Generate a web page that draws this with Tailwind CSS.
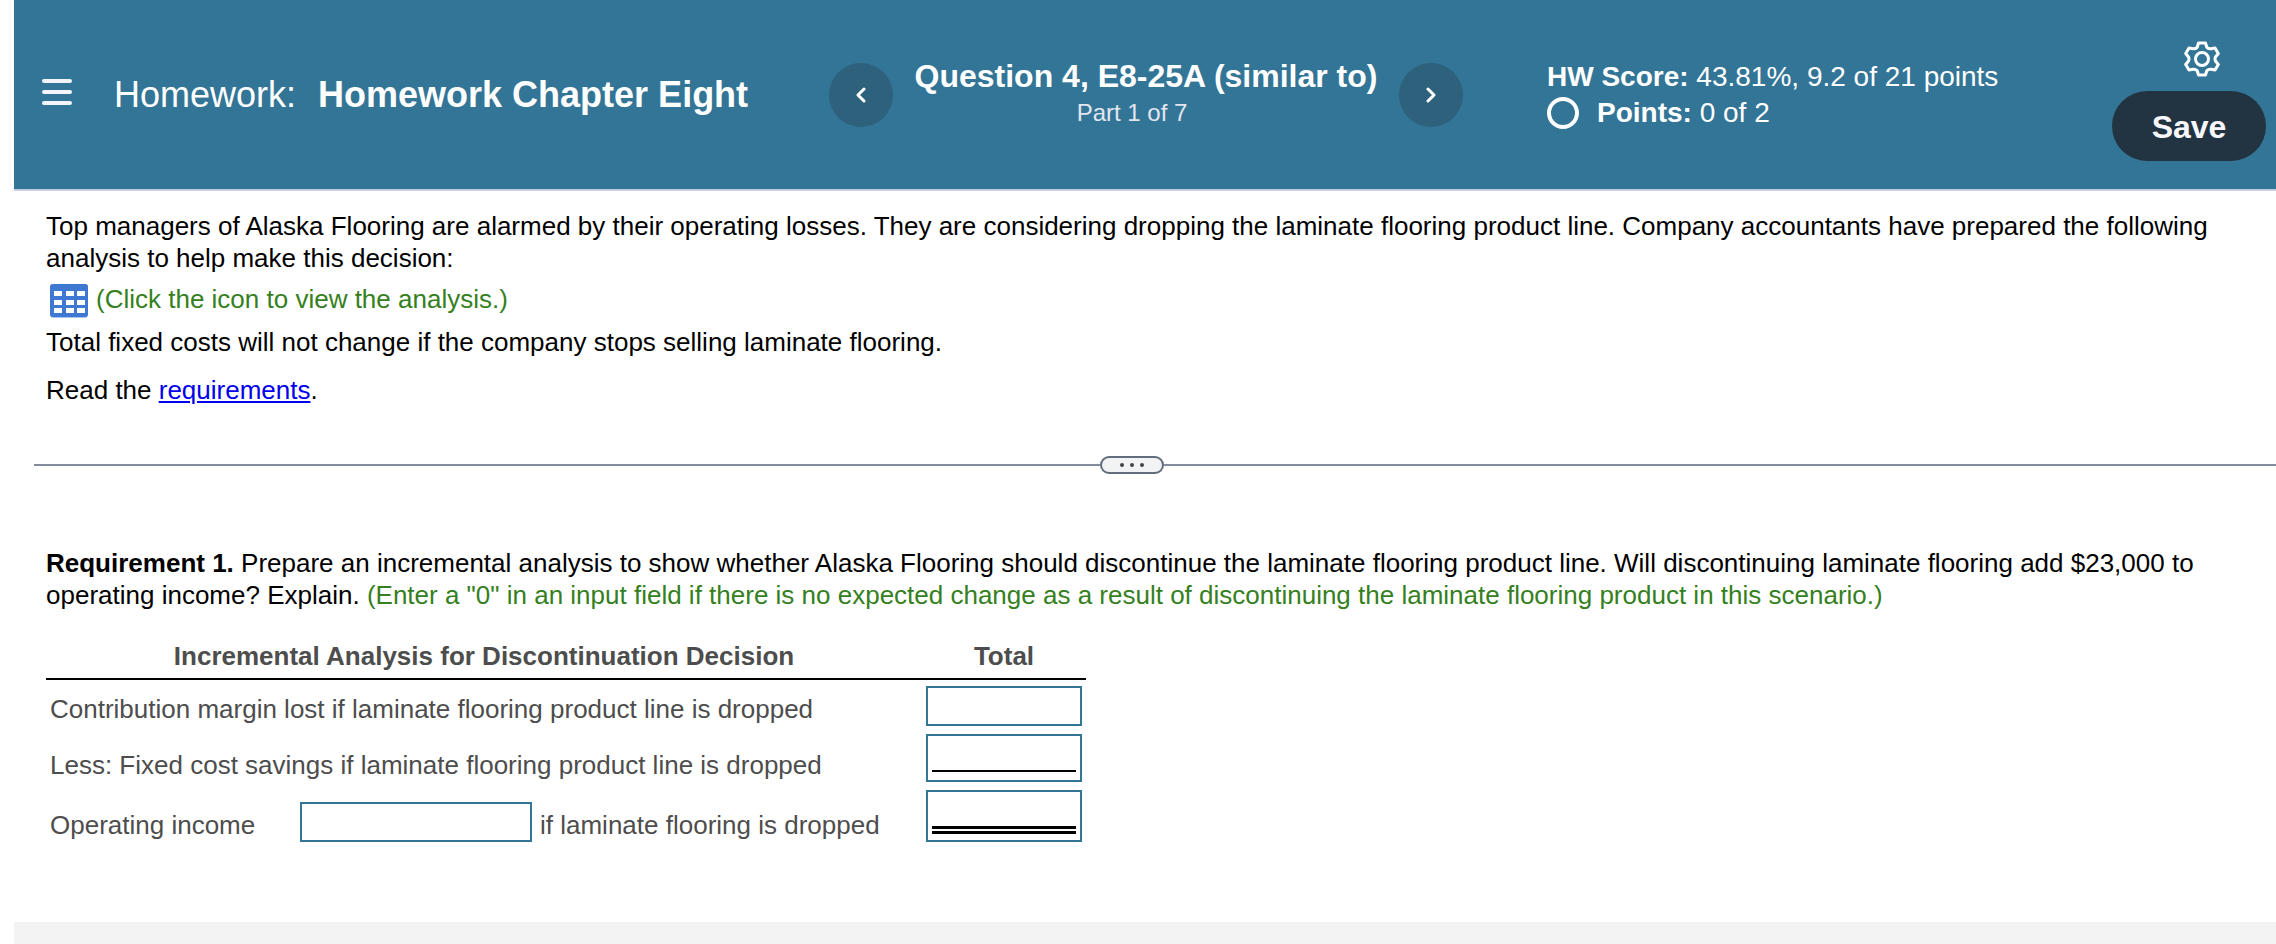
<!DOCTYPE html>
<html lang="en">

<head>
    <meta charset="UTF-8" />
    <meta name="viewport" content="width=device-width, initial-scale=1.0" />
    <title>Homework Chapter Eight</title>
    <script src="https://cdn.jsdelivr.net/npm/@tailwindcss/browser@4"></script>
</head>

<body class="bg-white min-h-screen pl-[14px] flex flex-col font-['Liberation_Sans',Arial,sans-serif] text-[26px] leading-8 text-black">
    <!-- Header -->
    <header class="bg-[#337596] border-b-2 border-[#c7cce0] h-[191px] shrink-0 flex items-center text-white">
        <div class="w-[815px] shrink-0 flex items-center pl-7">
            <button type="button" aria-label="Menu" class="mr-[42px] mb-1.5">
                <svg class="block w-[30px] h-[28px]" viewBox="0 0 30 28" stroke="#f4f5fa" stroke-width="4" stroke-linecap="round">
                    <path d="M2 3H28M2 14H28M2 25H28" />
                </svg>
            </button>
            <h1 class="text-4xl whitespace-nowrap">Homework: <span class="font-bold ml-3">Homework Chapter Eight</span></h1>
        </div>

        <nav class="w-[634px] shrink-0 flex items-center justify-between">
            <button type="button" aria-label="Previous question" class="size-16 rounded-full bg-[#2d617c] flex items-center justify-center">
                <svg class="w-3 h-4" viewBox="0 0 12 16" fill="none" stroke="#fff" stroke-width="3" stroke-linecap="round" stroke-linejoin="round">
                    <path d="M9 2L3 8L9 14" />
                </svg>
            </button>
            <div class="text-center whitespace-nowrap">
                <h2 class="text-[32px] leading-9 font-bold">Question 4, E8-25A (similar to)</h2>
                <p class="pr-7 text-2xl leading-[38px] text-[#e3e6f1]">Part 1 of 7</p>
            </div>
            <button type="button" aria-label="Next question" class="size-16 rounded-full bg-[#2d617c] flex items-center justify-center">
                <svg class="w-3 h-4" viewBox="0 0 12 16" fill="none" stroke="#fff" stroke-width="3" stroke-linecap="round" stroke-linejoin="round">
                    <path d="M3 2L9 8L3 14" />
                </svg>
            </button>
        </nav>

        <div class="ml-[84px] text-[28px] leading-9 whitespace-nowrap">
            <p><b>HW Score:</b> 43.81%, 9.2 of 21 points</p>
            <p class="flex items-center gap-[18px]">
                <svg class="size-8" viewBox="0 0 32 32" fill="none" stroke="#fff" stroke-width="4">
                    <circle cx="16" cy="16" r="14" />
                </svg>
                <span><b>Points:</b> 0 of 2</span>
            </p>
        </div>

        <div class="ml-auto mr-[10px] pt-3 flex flex-col items-end gap-[14px]">
            <button type="button" aria-label="Settings" class="mr-[46px]">
                <svg class="block size-9" viewBox="0 0 36 36" fill="none" stroke="#fff" stroke-width="3" stroke-linejoin="round">
                    <path d="M14.5 2h7l1.3 4.2q1.7 2 4.2 1.6l4-.8 3.3 5.5-2.8 3.5q-1 2 0 4l2.8 3.5-3.3 5.5-4-.8q-2.5-.4-4.2 1.6l-1.3 4.2h-7l-1.3-4.2q-1.7-2-4.2-1.6l-4 .8-3.3-5.5 2.8-3.5q1-2 0-4l-2.8-3.5 3.3-5.5 4 .8q2.5.4 4.2-1.6z" />
                    <circle cx="18" cy="18" r="6.5" />
                </svg>
            </button>
            <button type="button" class="h-[70px] w-[154px] rounded-full bg-[#223342] pt-0.5 text-[32px] font-bold text-[#f7f8fd]">Save</button>
        </div>
    </header>

    <!-- Question -->
    <section class="pl-8 pr-8 pt-[19px]">
        <p>Top managers of Alaska Flooring are alarmed by their operating losses. They are considering dropping the laminate flooring product line. Company accountants have prepared the following<br>analysis to help make this decision:</p>
        <p class="mt-1.5 flex items-center gap-2 text-[#357f21]">
            <button type="button" aria-label="View the analysis" class="ml-1 mt-1">
                <svg class="block w-[38px] h-[34px]" viewBox="0 0 38 34">
                    <rect width="38" height="34" rx="3" fill="#a9c4ee" />
                    <rect width="38" height="33" rx="3" fill="#3f78d3" />
                    <path fill="#fff" d="M4 7h8v5H4zM16 7h8v5h-8zM27 7h8v5h-8zM4 16h8v5H4zM16 16h8v5h-8zM27 16h8v5h-8zM4 24h8v5H4zM16 24h8v5h-8zM27 24h8v5h-8z" />
                </svg>
            </button>
            <span>(Click the icon to view the analysis.)</span>
        </p>
        <p class="mt-2">Total fixed costs will not change if the company stops selling laminate flooring.</p>
        <p class="mt-4">Read the <a href="#requirements" class="text-[#0000ee] underline">requirements</a>.</p>
    </section>

    <!-- Splitter -->
    <div class="mt-[50px] ml-5 flex items-center">
        <div class="h-[2px] w-[1066px] bg-[#838d9d]"></div>
        <button type="button" aria-label="Resize panels" class="w-16 h-[18px] rounded-full border-2 border-[#616d7c] bg-[#f2f3f5] flex items-center justify-center gap-[6px]">
            <span class="size-1 rounded-full bg-[#444]"></span>
            <span class="size-1 rounded-full bg-[#444]"></span>
            <span class="size-1 rounded-full bg-[#444]"></span>
        </button>
        <div class="h-[2px] flex-1 bg-[#838d9d]"></div>
    </div>

    <!-- Answer -->
    <section id="requirements" class="pl-8 pr-8 pt-[73px] pb-[75px]">
        <p><b>Requirement 1.</b> Prepare an incremental analysis to show whether Alaska Flooring should discontinue the laminate flooring product line. Will discontinuing laminate flooring add $23,000 to<br>operating income? Explain. <span class="text-[#357f21]">(Enter a "0" in an input field if there is no expected change as a result of discontinuing the laminate flooring product in this scenario.)</span></p>

        <table class="mt-[22px] w-[1040px] table-fixed border-collapse text-[#4d4d4d]">
            <thead>
                <tr class="h-[46px] border-b-2 border-black">
                    <th class="font-bold">Incremental Analysis for Discontinuation Decision</th>
                    <th class="w-[164px] font-bold">Total</th>
                </tr>
            </thead>
            <tbody>
                <tr class="h-[52px]">
                    <td class="pl-1 pt-1.5"><label for="margin">Contribution margin lost if laminate flooring product line is dropped</label></td>
                    <td class="pl-1 pr-1"><input id="margin" type="text" class="block w-full h-10 border-2 border-[#337596] px-1"></td>
                </tr>
                <tr class="h-[54px]">
                    <td class="pl-1 pt-3.5"><label for="savings">Less: Fixed cost savings if laminate flooring product line is dropped</label></td>
                    <td class="pl-1 pr-1">
                        <div class="h-12 border-2 border-[#337596] px-1">
                            <input id="savings" type="text" class="block w-full h-9 border-b-2 border-black">
                        </div>
                    </td>
                </tr>
                <tr class="h-[62px]">
                    <td class="pl-1">
                        <div class="flex items-center pt-3">
                            <label for="direction" class="w-[250px] pt-1.5">Operating income</label>
                            <input id="direction" type="text" class="w-[232px] h-10 border-2 border-[#337596] px-1 mr-2">
                            <label for="income" class="pt-1.5">if laminate flooring is dropped</label>
                        </div>
                    </td>
                    <td class="pl-1 pr-1">
                        <div class="h-[52px] border-2 border-[#337596] px-1">
                            <input id="income" type="text" class="block w-full h-[42px] border-b-8 border-double border-black">
                        </div>
                    </td>
                </tr>
            </tbody>
        </table>
    </section>

    <!-- Bottom bar -->
    <footer class="flex-1 min-h-4 bg-[#f3f3f3]"></footer>
</body>

</html>
